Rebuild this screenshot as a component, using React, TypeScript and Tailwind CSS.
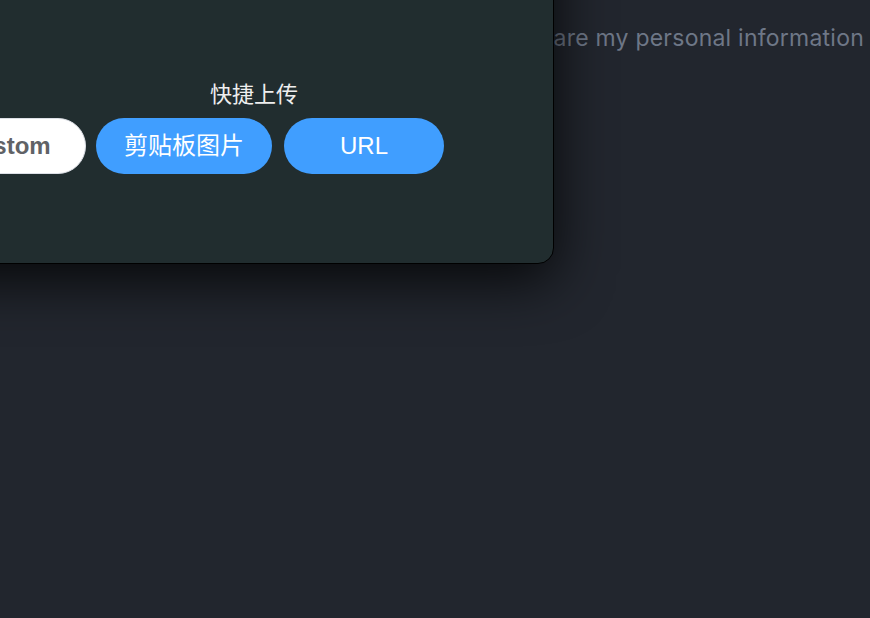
import React from "react";

const cjk = "font-['Liberation_Sans','Noto_Sans_CJK_SC',sans-serif]";

const App = () => {
  return (
    <div className="relative h-[618px] w-[870px] overflow-hidden bg-[#22262e]">
      {/* page text behind the dialog */}
      <div className="flex justify-end pr-[6px] pt-[22px]">
        <p className="font-['Inter',sans-serif] text-[23px] leading-[32px] tracking-[0.01em] text-[#6e7787]">
          I will not share my personal information
        </p>
      </div>

      {/* upload dialog */}
      <div className="absolute left-[-100px] top-[-100px] h-[364px] w-[654px] rounded-br-2xl border border-black bg-[#212d2f] shadow-[0_16px_56px_rgba(0,0,0,0.8)]">
        <div className={`pt-[179px] ${cjk}`}>
          <div className="w-[706px] text-center text-[22px] leading-[30px] text-[#eeeeee]">快捷上传</div>
          <div className="mt-[8px] flex items-center pl-[25px]">
            <button className="h-[56px] min-w-[160px] rounded-full border border-[#dcdfe6] bg-white px-[28px] text-[24px] font-semibold text-[#606266]">
              Custom
            </button>
            <button className="ml-[10px] h-[56px] min-w-[160px] rounded-full bg-[#409eff] px-[28px] text-[24px] text-white">
              剪贴板图片
            </button>
            <button className="ml-[12px] h-[56px] min-w-[160px] rounded-full bg-[#409eff] px-[28px] text-[24px] text-white">
              URL
            </button>
          </div>
        </div>
      </div>
    </div>
  );
};

export default App;
